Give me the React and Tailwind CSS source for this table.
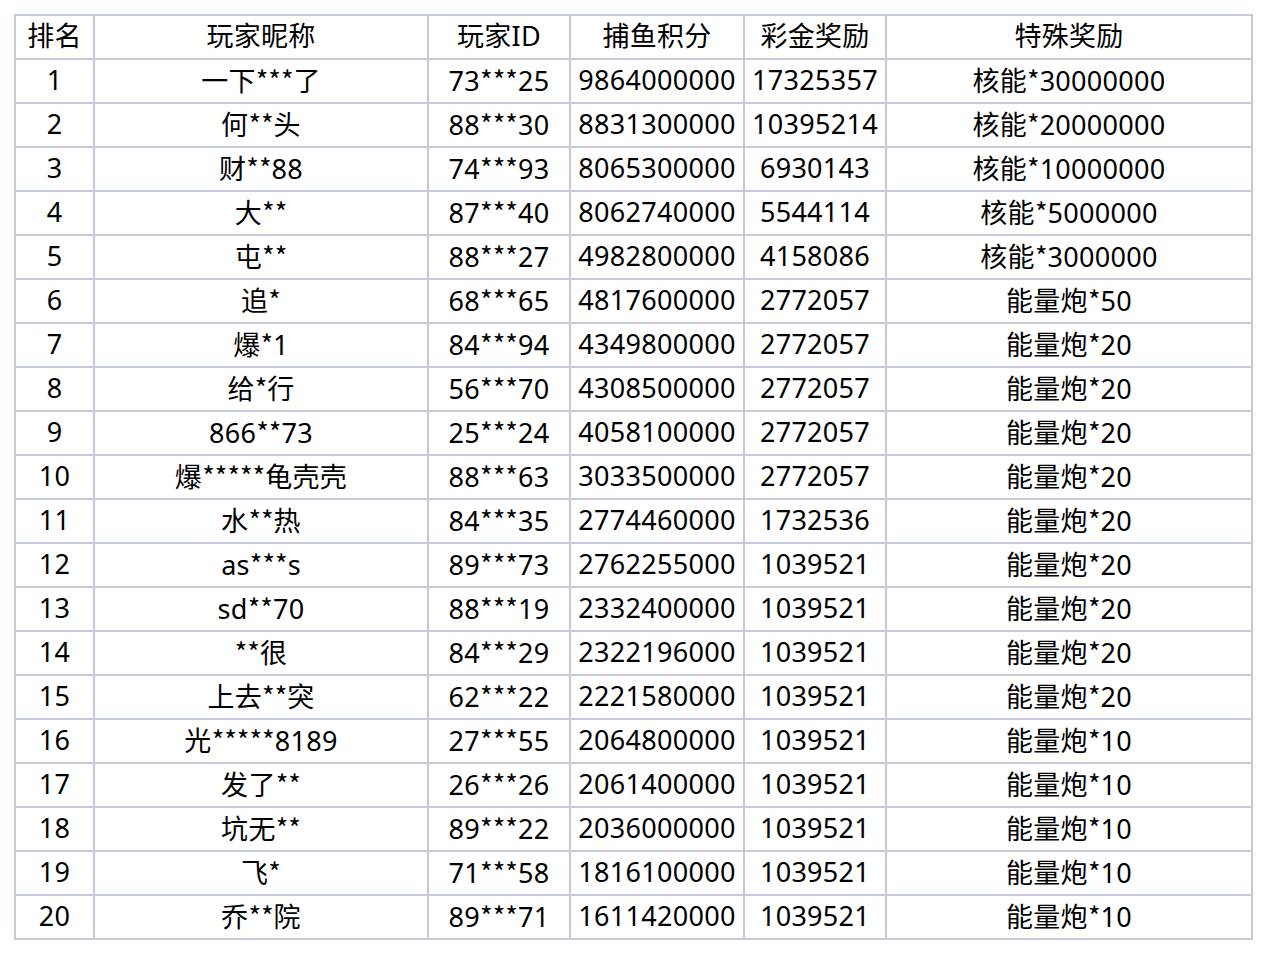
const rows = [
  ["1", "一下***了", "73***25", "9864000000", "17325357", "核能*30000000"],
  ["2", "何**头", "88***30", "8831300000", "10395214", "核能*20000000"],
  ["3", "财**88", "74***93", "8065300000", "6930143", "核能*10000000"],
  ["4", "大**", "87***40", "8062740000", "5544114", "核能*5000000"],
  ["5", "屯**", "88***27", "4982800000", "4158086", "核能*3000000"],
  ["6", "追*", "68***65", "4817600000", "2772057", "能量炮*50"],
  ["7", "爆*1", "84***94", "4349800000", "2772057", "能量炮*20"],
  ["8", "给*行", "56***70", "4308500000", "2772057", "能量炮*20"],
  ["9", "866**73", "25***24", "4058100000", "2772057", "能量炮*20"],
  ["10", "爆*****龟壳壳", "88***63", "3033500000", "2772057", "能量炮*20"],
  ["11", "水**热", "84***35", "2774460000", "1732536", "能量炮*20"],
  ["12", "as***s", "89***73", "2762255000", "1039521", "能量炮*20"],
  ["13", "sd**70", "88***19", "2332400000", "1039521", "能量炮*20"],
  ["14", "**很", "84***29", "2322196000", "1039521", "能量炮*20"],
  ["15", "上去**突", "62***22", "2221580000", "1039521", "能量炮*20"],
  ["16", "光*****8189", "27***55", "2064800000", "1039521", "能量炮*10"],
  ["17", "发了**", "26***26", "2061400000", "1039521", "能量炮*10"],
  ["18", "坑无**", "89***22", "2036000000", "1039521", "能量炮*10"],
  ["19", "飞*", "71***58", "1816100000", "1039521", "能量炮*10"],
  ["20", "乔**院", "89***71", "1611420000", "1039521", "能量炮*10"],
];

const headers = ["排名", "玩家昵称", "玩家ID", "捕鱼积分", "彩金奖励", "特殊奖励"];
const widths = ["w-[79px]", "w-[334px]", "w-[142px]", "w-[174px]", "w-[142px]", "w-[366px]"];

const cell =
  "border-2 border-[#c5cbdc] h-[44px] p-0 pb-[3px] text-center align-middle whitespace-nowrap";

// asterisks look closer in the CJK font
const Masked = ({ text }) =>
  text.split(/(\*+)/).map((part, i) =>
    part.startsWith("*") ? (
      <span key={i} className="tracking-normal" style={{ fontFamily: '"Noto Sans CJK SC", sans-serif' }}>
        {part}
      </span>
    ) : (
      part
    )
  );

export default function App() {
  return (
    <div
      className="bg-white w-[1268px] h-[956px] pt-[14px] pl-[14px] text-black text-[27px] leading-none tracking-[0.3px]"
      style={{ fontFamily: '"Noto Sans", "Noto Sans CJK SC", sans-serif' }}
    >
      <table className="border-collapse table-fixed w-[1239px]">
        <colgroup>
          {widths.map((w, i) => (
            <col key={i} className={w} />
          ))}
        </colgroup>
        <thead>
          <tr>
            {headers.map((h) => (
              <th key={h} className={`${cell} font-normal`}>
                {h}
              </th>
            ))}
          </tr>
        </thead>
        <tbody>
          {rows.map((r) => (
            <tr key={r[0]}>
              {r.map((v, i) => (
                <td key={i} className={cell}>
                  <Masked text={v} />
                </td>
              ))}
            </tr>
          ))}
        </tbody>
      </table>
    </div>
  );
}
